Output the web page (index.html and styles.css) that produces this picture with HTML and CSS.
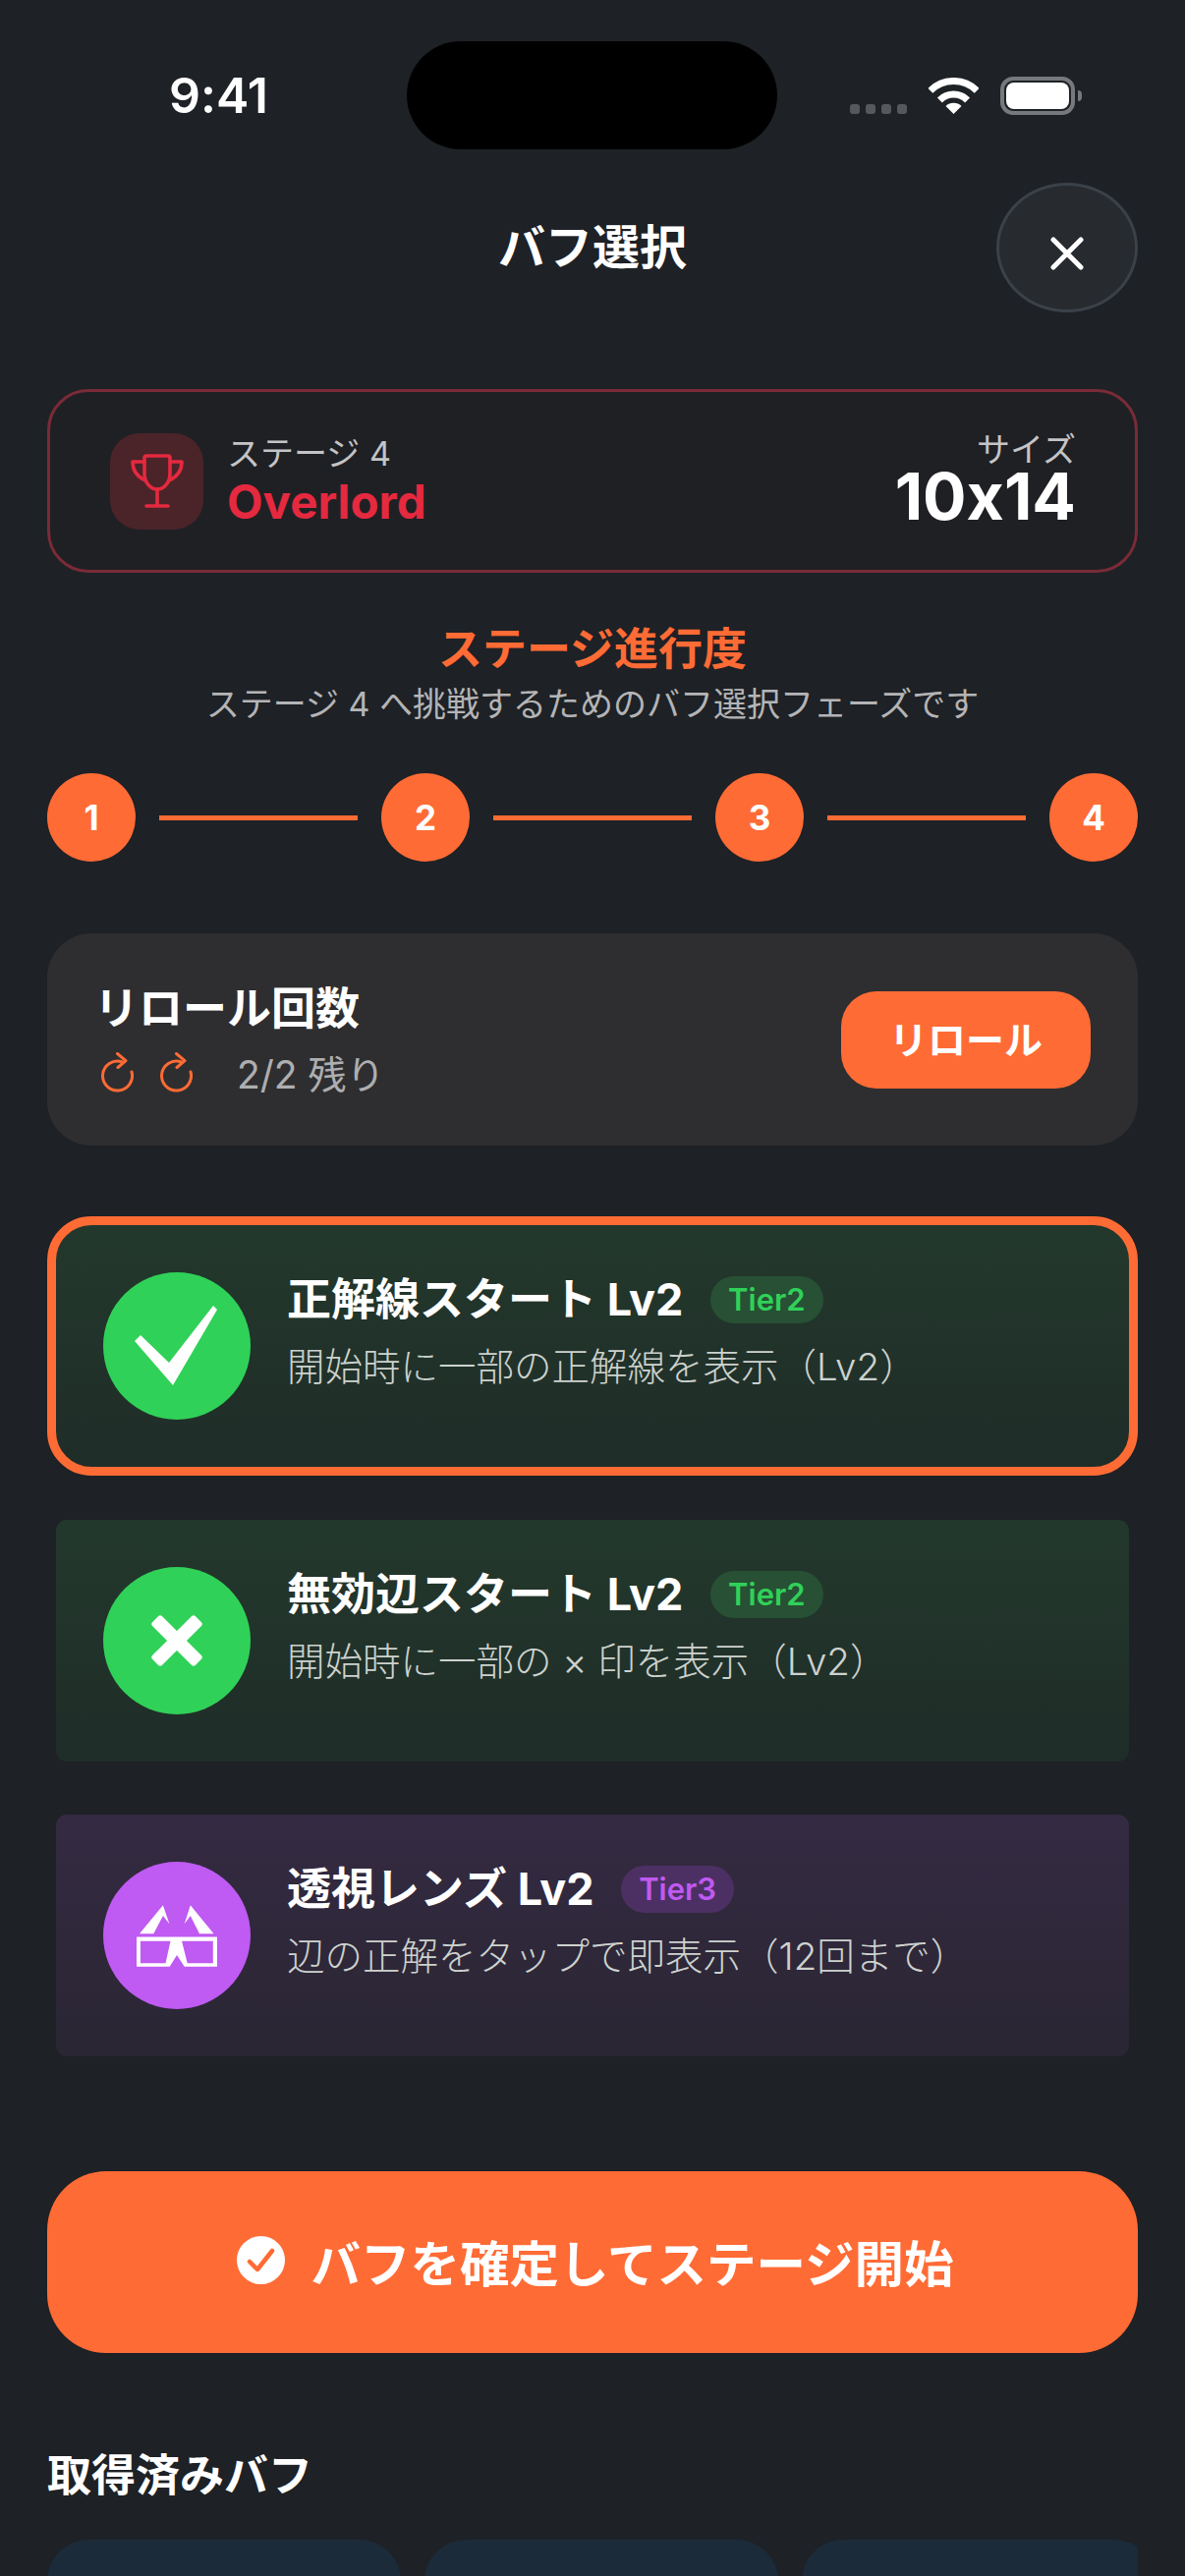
FILE: index.html

```html
<!doctype html>
<html lang="ja">
  <head>
    <meta charset="UTF-8" />
    <meta name="viewport" content="width=device-width, initial-scale=1.0" />
    <title>バフ選択</title>
    <link rel="stylesheet" href="styles.css">
  </head>
  <body>
    <div id="screen">
      <div class="status-bar">
        <div class="status-left"><span class="time">9:41</span></div>
        <div class="island"></div>
        <div class="status-right">
          <div class="signal"><i></i><i></i><i></i><i></i></div>
          <svg class="wifi" width="51" height="37" viewBox="0 0 51 37">
            <path d="M1.8 13.3A33.5 33.5 0 0 1 49.2 13.3" fill="none" stroke="#fff" stroke-width="7" />
            <path d="M11.4 22.9A20 20 0 0 1 39.6 22.9" fill="none" stroke="#fff" stroke-width="7" />
            <path d="M25.5 37L17.5 29A11.3 11.3 0 0 1 33.5 29Z" fill="#fff" />
          </svg>
          <div class="battery"><div class="battery-fill"></div></div>
          <div class="battery-nub"></div>
        </div>
      </div>

      <div class="header">
        <h1 class="page-title">バフ選択</h1>
        <button class="close-btn">
          <svg width="34" height="34" viewBox="0 0 34 34">
            <path d="M3 3L31 31M31 3L3 31" stroke="#fff" stroke-width="5" stroke-linecap="round" />
          </svg>
        </button>
      </div>

      <div class="stage-card">
        <div class="stage-icon">
          <svg width="54" height="55" viewBox="0 0 54 55" fill="none" stroke="#e5293f" stroke-width="3.6" stroke-linecap="round" stroke-linejoin="round">
            <path d="M14 7V3.5A2 2 0 0 1 16 2H38A2 2 0 0 1 40 3.5V20C40 29 34 36 27 36C20 36 14 29 14 20Z" />
            <path d="M14 8H2C2 17 6 23 15 27" />
            <path d="M40 8H52C52 17 48 23 39 27" />
            <path d="M27 36V52" />
            <path d="M16 53H38" />
          </svg>
        </div>
        <div class="stage-info">
          <div class="stage-label">ステージ 4</div>
          <div class="stage-name">Overlord</div>
        </div>
        <div class="stage-size">
          <div class="size-label">サイズ</div>
          <div class="size-value">10x14</div>
        </div>
      </div>

      <div class="progress-head">
        <div class="progress-title">ステージ進行度</div>
        <div class="progress-sub">ステージ 4 へ挑戦するためのバフ選択フェーズです</div>
      </div>

      <div class="steps">
        <div class="step">1</div>
        <div class="step-line"></div>
        <div class="step">2</div>
        <div class="step-line"></div>
        <div class="step">3</div>
        <div class="step-line"></div>
        <div class="step">4</div>
      </div>

      <div class="reroll-card">
        <div>
          <div class="reroll-title">リロール回数</div>
          <div class="reroll-row">
            <svg class="reroll-icon" width="33" height="41" viewBox="0 0 33 41" fill="none" stroke="#ff6b35" stroke-width="3" stroke-linecap="round" stroke-linejoin="round">
              <path d="M21 9.700A15 15 0 1 0 31 20" />
              <path d="M16.500 1.500L25 8.700L17 15.500" />
            </svg>
            <svg class="reroll-icon" width="33" height="41" viewBox="0 0 33 41" fill="none" stroke="#ff6b35" stroke-width="3" stroke-linecap="round" stroke-linejoin="round">
              <path d="M21 9.700A15 15 0 1 0 31 20" />
              <path d="M16.500 1.500L25 8.700L17 15.500" />
            </svg>
            <span class="reroll-count">2/2 残り</span>
          </div>
        </div>
        <button class="reroll-btn">リロール</button>
      </div>

      <div class="buff-list">
        <div class="buff buff-green selected">
          <div class="buff-icon icon-green">
            <svg width="150" height="150" viewBox="0 0 150 150">
              <path d="M32 70L38 64L67 92L112 34L116 38L71 115Z" fill="#fff" />
            </svg>
          </div>
          <div class="buff-text">
            <div class="buff-title">正解線スタート Lv2 <span class="tier tier-green">Tier2</span></div>
            <div class="buff-desc">開始時に一部の正解線を表示（Lv2）</div>
          </div>
        </div>

        <div class="buff buff-green">
          <div class="buff-icon icon-green">
            <svg width="150" height="150" viewBox="0 0 150 150">
              <rect x="44" y="68" width="62" height="14" rx="3" fill="#fff" transform="rotate(45 75 75)" />
              <rect x="44" y="68" width="62" height="14" rx="3" fill="#fff" transform="rotate(-45 75 75)" />
            </svg>
          </div>
          <div class="buff-text">
            <div class="buff-title">無効辺スタート Lv2 <span class="tier tier-green">Tier2</span></div>
            <div class="buff-desc">開始時に一部の × 印を表示（Lv2）</div>
          </div>
        </div>

        <div class="buff buff-purple">
          <div class="buff-icon icon-purple">
            <svg width="150" height="150" viewBox="0 0 150 150">
              <path d="M37 73.300L60.900 44.300L67.400 63.300L60.900 55L51.300 73.300Z" fill="#fff" />
              <path d="M112.500 73.300L88.800 44.300L82.700 63.300L88.800 55L98 73.300Z" fill="#fff" />
              <path fill="#fff" fill-rule="evenodd" d="M34 76.500H116V106.700H82.700L75 95L67.700 106.700H34ZM37.900 80.700V103.300H63.500L68.500 80.700ZM80 80.700L85.700 103.300H111.800V80.700Z" />
            </svg>
          </div>
          <div class="buff-text">
            <div class="buff-title">透視レンズ Lv2 <span class="tier tier-purple">Tier3</span></div>
            <div class="buff-desc">辺の正解をタップで即表示（12回まで）</div>
          </div>
        </div>
      </div>

      <button class="confirm-btn">
        <svg width="49" height="49" viewBox="0 0 49 49">
          <circle cx="24.500" cy="24.500" r="24.500" fill="#fff" />
          <path d="M13 26L21 34L36 15" fill="none" stroke="#ff6b35" stroke-width="4.500" stroke-linecap="round" stroke-linejoin="round" />
        </svg>
        <span>バフを確定してステージ開始</span>
      </button>

      <div class="owned-title">取得済みバフ</div>
      <div class="owned-list">
        <div class="owned-card"></div>
        <div class="owned-card"></div>
        <div class="owned-card"></div>
      </div>
    </div>
  </body>
</html>
```

FILE: styles.css

```css
* {
  box-sizing: border-box;
}

html,
body {
  margin: 0;
  height: 100%;
  overflow: hidden;
}

body {
  background-color: #1e2125;
  color: #fff;
  font-family: "Inter", "Noto Sans CJK JP", sans-serif;
  font-feature-settings: "calt" 0;
}

#screen {
  height: 2622px;
  padding: 0 48px;
  overflow: hidden;
}

button {
  font-family: inherit;
  border: none;
  color: #fff;
  padding: 0;
}

/* status bar */
.status-bar {
  display: flex;
  height: 186px;
  margin: 0 -48px;
  padding-top: 42px;
}

.status-left {
  width: 414px;
  height: 110px;
  padding-left: 172px;
  display: flex;
  align-items: center;
}

.time {
  font-size: 50px;
  font-weight: 600;
  line-height: 1;
}

.island {
  width: 377px;
  height: 110px;
  background-color: #000;
  border-radius: 55px;
}

.status-right {
  display: flex;
  align-items: flex-start;
  padding: 36px 0 0 74px;
}

.signal {
  display: flex;
  gap: 6px;
  margin: 28px 22px 0 0;
}

.signal i {
  width: 10px;
  height: 10px;
  border-radius: 3px;
  background-color: #55595d;
}

.wifi {
  margin: 1px 22px 0 0;
}

.battery {
  width: 76px;
  height: 39px;
  border: 4px solid #77797c;
  border-radius: 13px;
  padding: 2px;
}

.battery-fill {
  height: 100%;
  background-color: #fff;
  border-radius: 8px;
}

.battery-nub {
  width: 4px;
  height: 11px;
  margin: 14px 0 0 3px;
  background-color: #77797c;
  border-radius: 0 4px 4px 0;
}

/* header */
.header {
  position: relative;
  display: flex;
  justify-content: center;
  align-items: center;
  height: 132px;
}

.page-title {
  margin: 0;
  font-size: 48px;
  line-height: 60px;
  font-weight: 700;
}

.close-btn {
  position: absolute;
  right: 0;
  top: 0;
  width: 144px;
  height: 132px;
  padding-top: 12px;
  background-color: #272a2e;
  border: 3px solid #3b4149;
  border-radius: 50%;
  display: flex;
  align-items: center;
  justify-content: center;
}

/* stage card */
.stage-card {
  display: flex;
  align-items: center;
  height: 187px;
  margin-top: 78px;
  padding: 0 60px 0 61px;
  border: 3px solid #7a2b38;
  border-radius: 42px;
  background-color: #1f2024;
}

.stage-icon {
  width: 95px;
  height: 98px;
  margin-right: 24px;
  background-color: #4a2429;
  border-radius: 30px;
  display: flex;
  align-items: center;
  justify-content: center;
}

.stage-info {
  flex: 1;
}

.stage-label {
  font-size: 34px;
  line-height: 42px;
  color: #c4c4c6;
}

.stage-name {
  font-size: 47.500px;
  line-height: 56px;
  font-weight: 700;
  color: #e5293f;
}

.stage-size {
  padding-bottom: 6px;
  text-align: right;
}

.size-label {
  font-size: 34px;
  line-height: 36px;
  color: #c4c4c6;
}

.size-value {
  font-size: 66px;
  line-height: 58px;
  font-weight: 700;
}

/* progress */
.progress-head {
  margin-top: 50px;
  text-align: center;
}

.progress-title {
  font-size: 45px;
  line-height: 56px;
  font-weight: 700;
  color: #ff6b35;
}

.progress-sub {
  font-size: 34px;
  line-height: 48px;
  margin-top: 4px;
  color: #b4b4b6;
}

.steps {
  display: flex;
  align-items: center;
  gap: 24px;
  margin-top: 46px;
}

.step {
  width: 90px;
  height: 90px;
  border-radius: 50%;
  background-color: #ff6b35;
  font-size: 35px;
  font-weight: 700;
  display: flex;
  align-items: center;
  justify-content: center;
}

.step-line {
  flex: 1;
  height: 5px;
  background-color: #ff6b35;
}

/* reroll */
.reroll-card {
  display: flex;
  align-items: center;
  justify-content: space-between;
  height: 216px;
  margin-top: 73px;
  padding: 0 48px 0 48px;
  background-color: #2e2e30;
  border-radius: 45px;
}

.reroll-title {
  font-size: 45px;
  line-height: 60px;
  font-weight: 700;
}

.reroll-row {
  display: flex;
  align-items: center;
  gap: 27px;
  margin: 6px 0 0 7px;
}

.reroll-count {
  margin-left: 18px;
  font-size: 39px;
  color: #aeaeb0;
}

.reroll-btn {
  width: 254px;
  height: 99px;
  padding-bottom: 5px;
  background-color: #ff6b35;
  border-radius: 36px;
  font-size: 39px;
  font-weight: 700;
}

/* buff cards */
.buff-list {
  display: flex;
  flex-direction: column;
  gap: 36px;
  margin-top: 72px;
}

.buff {
  display: flex;
  align-items: center;
  height: 264px;
  padding: 0 48px;
  gap: 37px;
  border: 9px solid #1e2125;
  border-radius: 20px;
}

.buff.selected {
  border-color: #ff6b35;
  border-radius: 45px;
}

.buff-green {
  background-image: linear-gradient(#23382c, #1f2d28);
}

.buff-purple {
  background-image: linear-gradient(#342a42, #2a2633);
}

.buff-icon {
  width: 150px;
  height: 150px;
  border-radius: 50%;
  flex-shrink: 0;
}

.buff-icon svg {
  display: block;
}

.icon-green {
  background-color: #30d158;
}

.icon-purple {
  background-color: #bf5af2;
}

.buff-text {
  padding-bottom: 32px;
}

.buff-title {
  display: flex;
  align-items: center;
  font-size: 45px;
  line-height: 60px;
  font-weight: 700;
  white-space: pre;
}

.tier {
  margin-left: 17px;
  padding: 0 18px;
  height: 48px;
  border-radius: 24px;
  font-size: 31px;
  line-height: 48px;
  font-weight: 600;
}

.tier-green {
  color: #30d158;
  background-color: #275035;
}

.tier-purple {
  color: #bf5af2;
  background-color: #4d3063;
}

.buff-desc {
  margin-top: 13px;
  font-size: 38.500px;
  line-height: 50px;
  font-weight: 300;
  color: #cdd2ce;
}

/* confirm */
.confirm-btn {
  display: flex;
  align-items: center;
  justify-content: center;
  gap: 27px;
  width: 100%;
  height: 185px;
  margin-top: 108px;
  padding: 0 0 4px 5px;
  background-color: #ff6b35;
  border-radius: 60px;
  font-size: 50.500px;
  font-weight: 700;
}

.owned-title {
  margin-top: 95px;
  font-size: 45px;
  line-height: 60px;
  font-weight: 700;
}

.owned-list {
  display: flex;
  gap: 24px;
  margin-top: 35px;
  overflow: hidden;
  border-radius: 0 12px 0 0;
}

.owned-card {
  flex: 0 0 360px;
  height: 200px;
  background-color: #1c2b3a;
  border-radius: 42px;
}
```
